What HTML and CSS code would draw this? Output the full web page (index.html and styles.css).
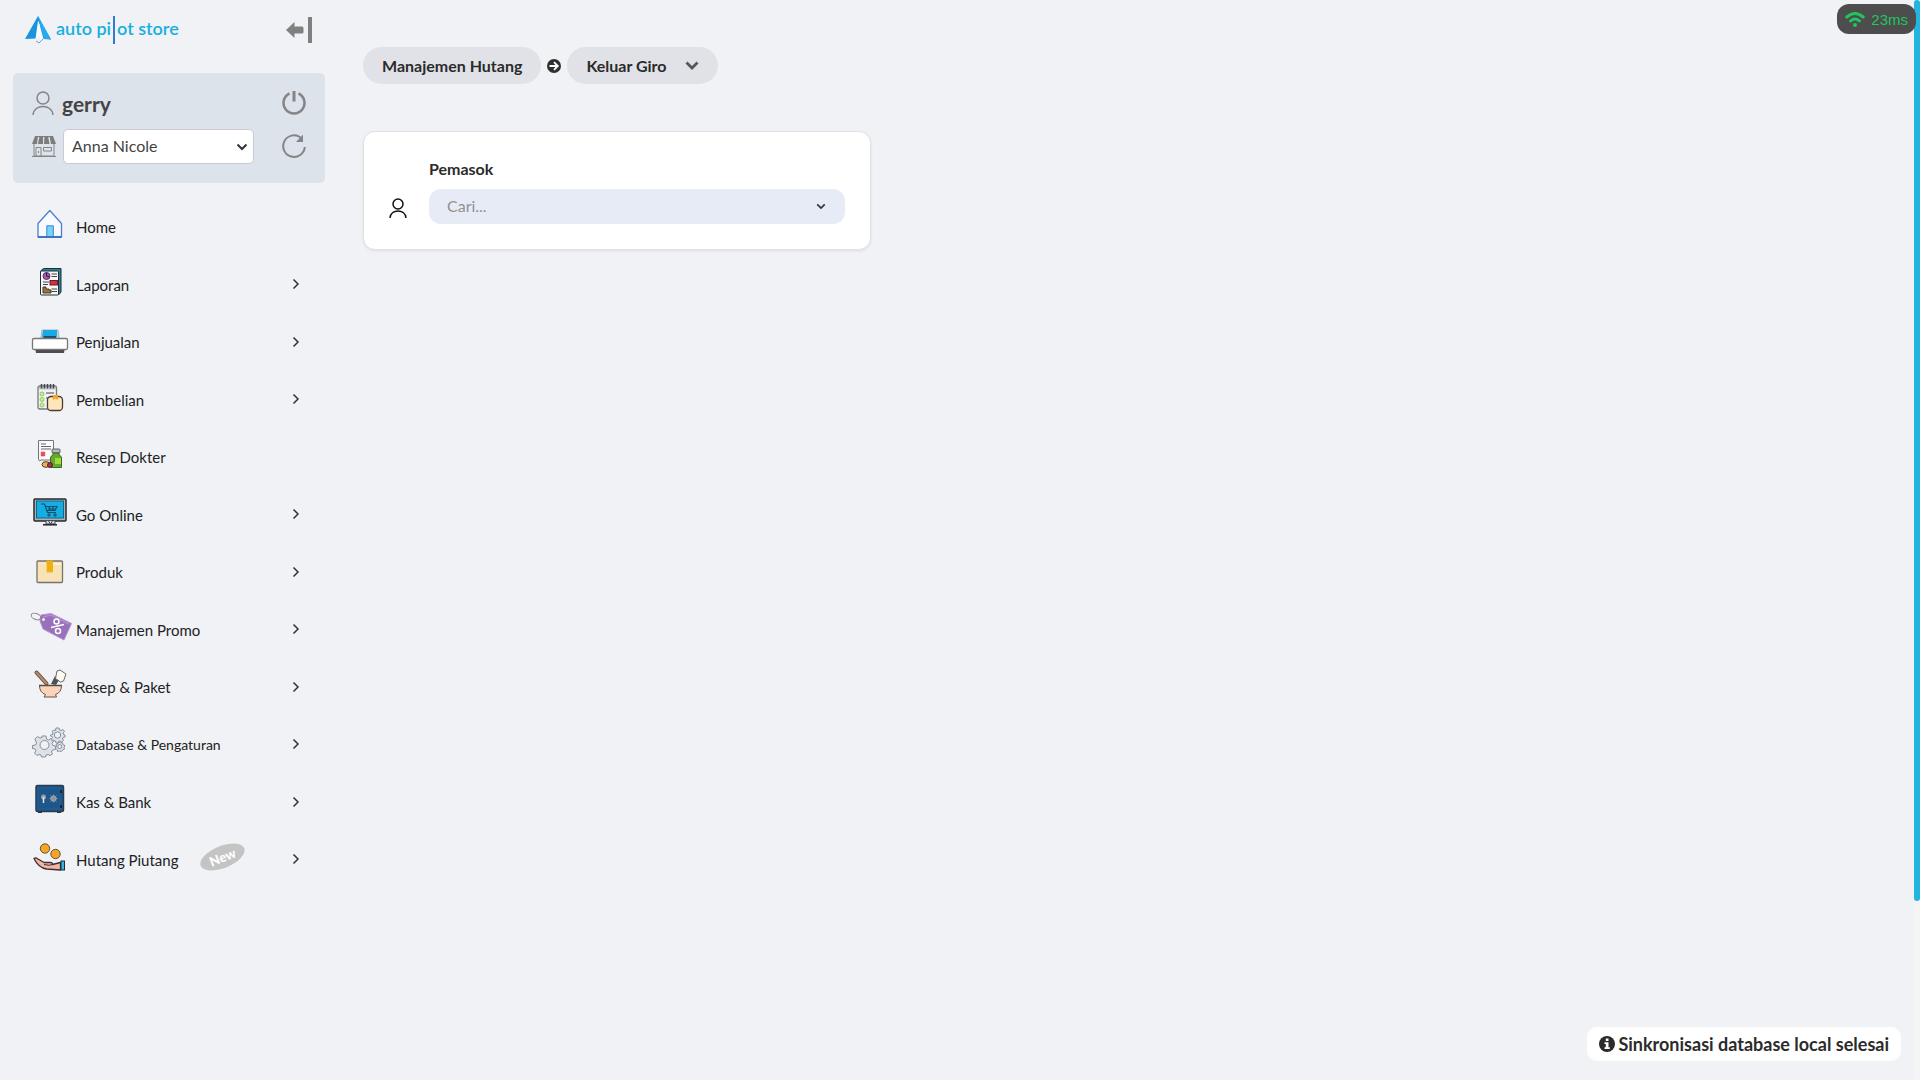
FILE: index.html
```
<!DOCTYPE html>
<html lang="id">
<head>
    <meta charset="UTF-8">
    <meta name="viewport" content="width=device-width, initial-scale=1.0">
    <title>Auto Pilot Store - Keluar Giro</title>
    <link rel="stylesheet" href="styles.css">
</head>
<body>

    <!-- shared icons -->
    <svg class="sprite" width="0" height="0" aria-hidden="true">
        <symbol id="chevron-right" viewBox="0 0 10 12">
            <path d="M2.5 1.5L7 6l-4.5 4.5" fill="none" stroke="currentColor" stroke-width="1.5"/>
        </symbol>
        <symbol id="chevron-down" viewBox="0 0 12 8">
            <path d="M1.5 1.5L6 6l4.5-4.5" fill="none" stroke="currentColor" stroke-width="2"/>
        </symbol>
        <symbol id="user" viewBox="0 0 22 24">
            <circle cx="11" cy="7" r="6" fill="none" stroke="currentColor" stroke-width="1.5"/>
            <path d="M1 24C2 12.5 20 12.5 21 24" fill="none" stroke="currentColor" stroke-width="1.5"/>
        </symbol>
    </svg>

    <div class="layout">

        <aside class="sidebar">
            <div class="sidebar-header">
                <a href="#" class="logo">
                    <svg width="26" height="28" viewBox="0 0 26 28">
                        <path d="M13 0L26 23.5l-7.5-.5L14.500 8 13 5l-2.500 17.500L0 23z" fill="#1b94de"/>
                        <path d="M13 0L26 23.5l-7-1L14 5z" fill="#27aaf0"/>
                        <path d="M13.5 5l4 19-4-3.500-2.500 2.500z" fill="#f5faff"/>
                        <path d="M11 25l3 2 4-4" fill="none" stroke="#6f9fc8"/>
                    </svg>
                    <span class="logo-text">auto pi<span class="logo-bar"></span>ot store</span>
                </a>
                <button type="button" class="icon-btn" aria-label="Tutup menu">
                    <svg width="26" height="26" viewBox="0 0 26 26" fill="#808080">
                        <path d="M0 13l8.5-8v4.5H16q1.5 0 1.5 1.5v4q0 1.5-1.5 1.5H8.5V21z"/>
                        <rect x="22" width="4" height="26"/>
                    </svg>
                </button>
            </div>

            <div class="profile">
                <div class="profile-row">
                    <svg class="profile-icon" width="22" height="24"><use href="#user"/></svg>
                    <span class="profile-name">gerry</span>
                    <button type="button" class="icon-btn" aria-label="Keluar">
                        <svg width="24" height="24" viewBox="0 0 24 24" fill="none" stroke="#858585" stroke-width="2.5">
                            <path d="M7.5 2.5a10.5 10.5 0 1 0 9 0"/>
                            <path d="M12 0v10.5" stroke-width="3"/>
                        </svg>
                    </button>
                </div>
                <div class="profile-row">
                    <svg class="profile-icon" width="24" height="21" viewBox="0 0 24 21">
                        <path d="M2 8v12h20V8M0 20.5h24M4 20v-8.5h5V20M6.5 15v2M11.5 11.5h8V15h-8z" fill="none" stroke="#858585"/>
                        <path d="M3 0h3L5 8H0zM7.5 0H11v8H6zM12.500 0H16l1.5 8H12zM17.500 0H21l3 8h-5z" fill="#7c7c7c"/>
                        <path d="M3 .5h18" stroke="#7c7c7c"/>
                    </svg>
                    <div class="select-wrap">
                        <select class="store-select" aria-label="Toko">
                            <option>Anna Nicole</option>
                        </select>
                        <svg class="select-arrow" width="12" height="8"><use href="#chevron-down"/></svg>
                    </div>
                    <button type="button" class="icon-btn" aria-label="Muat ulang">
                        <svg width="24" height="24" viewBox="0 0 24 24">
                            <path d="M22.8 13A10.8 10.8 0 1 1 18.5 3.5" fill="none" stroke="#858585" stroke-width="2"/>
                            <path d="M21 .5V8h-7z" fill="#858585"/>
                        </svg>
                    </button>
                </div>
            </div>

            <nav class="menu">
                <a href="#" class="menu-item">
                    <svg class="menu-icon" viewBox="0 0 42 32">
                        <path d="M8 15.5V29h23.5V15.5L19.8 2.5z" fill="#f7fbff" stroke="#4a7fd0" stroke-width="1.3" stroke-linejoin="round"/>
                        <path d="M8 29h23.5" stroke="#2d65ba" stroke-width="1.5"/>
                        <path d="M16.800 28V17.800h6.500V28" fill="#74d4fa" stroke="#3d83cc"/>
                    </svg>
                    <span class="menu-label">Home</span>
                </a>
                <a href="#" class="menu-item">
                    <svg class="menu-icon" viewBox="0 0 42 32">
                        <path d="M10.5 5l3-2.5H31V26l-2.500 3z" fill="#2c8298" stroke="#15323c"/>
                        <rect x="10.5" y="5" width="18" height="24" rx="1" fill="#f8f8f8" stroke="#2a2a32"/>
                        <circle cx="16.5" cy="10" r="3.5" fill="#a45ab4" stroke="#5b3168"/>
                        <path d="M16.5 10V6.5M16.5 10l3 1" stroke="#30143a"/>
                        <path d="M21.5 8H27M21.5 10.5H27M13 16h6M13 18.5h5M21.5 23H27M21.5 25.5H27" stroke="#454545"/>
                        <rect x="20" y="14.5" width="7.5" height="4.5" fill="#d72e43" stroke="#6d1c2a"/>
                        <path d="M13 21v6h8v-3h-2v-1h-3v-2z" fill="#8e7a3c" stroke="#493b21"/>
                    </svg>
                    <span class="menu-label">Laporan</span>
                    <svg class="menu-arrow"><use href="#chevron-right"/></svg>
                </a>
                <a href="#" class="menu-item">
                    <svg class="menu-icon" viewBox="0 0 42 32">
                        <path d="M12 7h16l1 8H11z" fill="#d6dde1" stroke="#a3b5bd"/>
                        <path d="M13 7h14v7H12z" fill="#18aae2"/>
                        <path d="M14 13h12v2H13z" fill="#17506b"/>
                        <rect x="2.5" y="15.5" width="35" height="11" rx="1.5" fill="#fff" stroke="#777" stroke-width="1.3"/>
                        <path d="M5.500 27h29l-.5 3H6z" fill="#4d4d52"/>
                    </svg>
                    <span class="menu-label">Penjualan</span>
                    <svg class="menu-arrow"><use href="#chevron-right"/></svg>
                </a>
                <a href="#" class="menu-item">
                    <svg class="menu-icon" viewBox="0 0 42 32">
                        <rect x="8" y="5" width="18.5" height="23" rx="2" fill="#eff1f3" stroke="#767b80" stroke-width="1.3"/>
                        <path d="M9 6h17v2.500H9z" fill="#c5c9ce"/>
                        <path d="M11.5 3v4.5M14.5 3v4.5M17.5 3v4.5M20.5 3v4.5M23.5 3v4.5" stroke="#44464c" stroke-width="1.5"/>
                        <g fill="#c8f0a2" stroke="#8bcb55"><circle cx="12" cy="13" r="2"/><circle cx="12" cy="18.5" r="2"/><circle cx="12" cy="24" r="2"/></g>
                        <path d="M16 12h8M16 17h2" stroke="#45484c"/>
                        <rect x="17.5" y="15.5" width="15" height="14" rx="3.5" fill="#ffe5ba" stroke="#4a3e38" stroke-width="1.3"/>
                        <path d="M23 14h5v5l-2.500-1.500L23 19z" fill="#f5a525"/>
                    </svg>
                    <span class="menu-label">Pembelian</span>
                    <svg class="menu-arrow"><use href="#chevron-right"/></svg>
                </a>
                <a href="#" class="menu-item">
                    <svg class="menu-icon" viewBox="0 0 42 32">
                        <path d="M8.5 2.5h15V22H11l-1.500 1-1-2z" fill="#fafafa" stroke="#74747b"/>
                        <path d="M11 6h5M11 8.5h10M11 11h10" stroke="#66666e"/>
                        <path d="M13 13.5v5M10.5 16h5M11 14l4 4M15 14l-4 4" stroke="#e6495c" stroke-width="1.2"/>
                        <rect x="22" y="11" width="8" height="4" rx="1" fill="#b9bbc0" stroke="#5c6065"/>
                        <path d="M23 15h6v2q2.500 1 2.500 3v9.500h-11V20q0-2 2.500-3z" fill="#61ab2d" stroke="#396b23"/>
                        <path d="M25 20h6v6h-6z" fill="#a4d83f"/>
                        <ellipse cx="16" cy="26.5" rx="4" ry="2.8" fill="#f3b14b" stroke="#523c30"/>
                        <circle cx="20" cy="27" r="2.5" fill="#9e3445" stroke="#4c2833"/>
                    </svg>
                    <span class="menu-label">Resep Dokter</span>
                </a>
                <a href="#" class="menu-item">
                    <svg class="menu-icon" viewBox="0 0 42 32">
                        <rect x="4" y="3" width="32" height="22" rx="1" fill="#a8b1b8" stroke="#27282d" stroke-width="1.5"/>
                        <rect x="6.5" y="5" width="27" height="17" fill="#14aee5" stroke="#176484"/>
                        <path d="M11 8h3.500l3 8.500H26M15.500 10.500H27l-2 4h-8M18 13h8M19 10.500l1 4M23 10.500v4" fill="none" stroke="#174d6a" stroke-width="1.2"/>
                        <circle cx="19" cy="19" r="1.2" fill="#1b91bf" stroke="#174d6a"/>
                        <circle cx="25" cy="19" r="1.2" fill="#1b91bf" stroke="#174d6a"/>
                        <path d="M16 25v3h9v-3M18.5 25l2 3 2-3" fill="#d6d8db" stroke="#45484d"/>
                        <path d="M13 28.8h14" stroke="#202328" stroke-width="1.5"/>
                    </svg>
                    <span class="menu-label">Go Online</span>
                    <svg class="menu-arrow"><use href="#chevron-right"/></svg>
                </a>
                <a href="#" class="menu-item">
                    <svg class="menu-icon" viewBox="0 0 42 32">
                        <rect x="7" y="8" width="25.5" height="21.5" rx="1" fill="#f8e3b8" stroke="#77736d" stroke-width="1.3"/>
                        <path d="M9 10h7v10h7V10h8v2H23" fill="#fff0ce"/>
                        <path d="M16.5 7.5H23v12h-6.5z" fill="#eeb111"/>
                    </svg>
                    <span class="menu-label">Produk</span>
                    <svg class="menu-arrow"><use href="#chevron-right"/></svg>
                </a>
                <a href="#" class="menu-item">
                    <svg class="menu-icon" viewBox="0 0 42 32">
                        <path d="M11 4l10-1.5 20.5 10L34 29 13 18l-3-8z" fill="#9870bc" stroke="#b397cd"/>
                        <path d="M13 6l8-2 18 9" fill="none" stroke="#b68ad0" stroke-width="1.5"/>
                        <circle cx="13.5" cy="8.5" r="1.5" fill="#eee"/>
                        <ellipse cx="6" cy="5.5" rx="5" ry="3" transform="rotate(20 6 5.5)" fill="none" stroke="#85858a"/>
                        <circle cx="26.5" cy="10.5" r="2.5" fill="none" stroke="#fff" stroke-width="1.5"/>
                        <circle cx="28" cy="20" r="2.5" fill="none" stroke="#fff" stroke-width="1.5"/>
                        <path d="M21 16.500l13-3" stroke="#fff" stroke-width="1.5"/>
                    </svg>
                    <span class="menu-label">Manajemen Promo</span>
                    <svg class="menu-arrow"><use href="#chevron-right"/></svg>
                </a>
                <a href="#" class="menu-item">
                    <svg class="menu-icon" viewBox="0 0 42 32">
                        <path d="M6.500 4.500l10 11" stroke="#594238" stroke-width="4" stroke-linecap="round"/>
                        <path d="M6.500 4.500l10 11" stroke="#b58a6e" stroke-width="2.5" stroke-linecap="round"/>
                        <path d="M21 16l4-8 4 4-3 5z" fill="#4f5053"/>
                        <path d="M27 3l3-1 6 4-2.500 7-3 1-5-3.500z" fill="#fffaf0" stroke="#696767"/>
                        <path d="M9.500 17.500h22q0 7-6 9l1 2.500H14l1.500-2.500q-6-2-6-9z" fill="#fad3b8" stroke="#6a5149"/>
                        <path d="M9 17.5h23" stroke="#544a48" stroke-width="1.5"/>
                    </svg>
                    <span class="menu-label">Resep &amp; Paket</span>
                    <svg class="menu-arrow"><use href="#chevron-right"/></svg>
                </a>
                <a href="#" class="menu-item">
                    <svg class="menu-icon" viewBox="0 0 42 32">
                        <g fill="#dde2e8" stroke="#87909a">
                            <path d="M12 10h4l.5 3 2 1 2.500-1.500 2.500 2.500-1.500 2.500 1 2 2.500.5v3.500l-3 .5-1 2 1 2-2.500 1.500-2-1-2 .5-.5 2h-4l-.5-2-2-.5-2 1-2.500-2.500 1.500-2.500-1-1.500-2.500-.5v-3l3-.5 1-2L5 13l2.500-2.500 2.500 1.500 2-.5z"/>
                            <path d="M26 2h3l.5 2 1.500.5 2-1 1.500 2L33 7l.5 1.500 1.500.5v2l-2 .5-.5 1.500 1 1.500-2 1.500-1.500-1-1.500.5-.5 1.500h-2l-.5-2-1.500-.5-1.500.5-1-2 1-1.500-.5-1-1.500-.5V9l2-.5.5-1.500-1-1.500 2-1.500 1.500.5z"/>
                            <path d="M29 15.500l1.500 1.500 2-.5.5 2 2 1-1 2 .5 1.500-2 1-1 1.500-2-.5-2 .5-.5-2-1.500-1.500 1-2-.5-1.500 2-1z"/>
                            <circle cx="14.5" cy="19" r="4.5" fill="#eff1f5"/>
                            <circle cx="27.5" cy="9" r="3.2" fill="#eff1f5"/>
                            <circle cx="29.8" cy="20.5" r="2" fill="#eff1f5"/>
                        </g>
                    </svg>
                    <span class="menu-label menu-label-long">Database &amp; Pengaturan</span>
                    <svg class="menu-arrow"><use href="#chevron-right"/></svg>
                </a>
                <a href="#" class="menu-item">
                    <svg class="menu-icon" viewBox="0 0 42 32">
                        <path d="M8 28h4v2H8zM27 28h4v2h-4z" fill="#30343b"/>
                        <rect x="6" y="2.5" width="27.5" height="26" rx="1.5" fill="#1c568a" stroke="#293c50" stroke-width="1.5"/>
                        <path d="M8 5h22v21H8z" fill="none" stroke="#245f92"/>
                        <path d="M31 7v3M31 22v3" stroke="#182433" stroke-width="2"/>
                        <circle cx="13.5" cy="14" r="2.5" fill="#9aa0a8"/>
                        <path d="M13.5 14v6" stroke="#e9e1d9" stroke-width="1.5"/>
                        <circle cx="23.5" cy="15.5" r="2.5" fill="none" stroke="#a8a8a8" stroke-width="1.2"/>
                        <path d="M23.5 11.500v8M19.500 15.500h8M20.500 12.500l6 6M26.500 12.500l-6 6" stroke="#8b96a2"/>
                    </svg>
                    <span class="menu-label">Kas &amp; Bank</span>
                    <svg class="menu-arrow"><use href="#chevron-right"/></svg>
                </a>
                <a href="#" class="menu-item">
                    <svg class="menu-icon" viewBox="0 0 42 32">
                        <circle cx="15" cy="7.5" r="4.7" fill="#f6a623" stroke="#5f5040"/>
                        <circle cx="25.5" cy="13" r="4.7" fill="#f6a623" stroke="#5f5040"/>
                        <path d="M4 17.500q1.500-1.500 4 .5l6 3.500h6q3 0 2.500 2l8-2v7.500l-14-1q-8-1-12.500-10.500z" fill="#f5b5a2" stroke="#3a2f35" stroke-width="1.3" stroke-linejoin="round"/>
                        <path d="M14 23.500q5 1.500 9 0" fill="none" stroke="#3a2f35"/>
                        <rect x="31" y="20" width="3.5" height="9" fill="#31b8df" stroke="#202a35"/>
                    </svg>
                    <span class="menu-label">Hutang Piutang</span>
                    <span class="badge-new">New</span>
                    <svg class="menu-arrow"><use href="#chevron-right"/></svg>
                </a>
            </nav>
        </aside>

        <main class="content">
            <div class="breadcrumb">
                <button type="button" class="crumb">Manajemen Hutang</button>
                <svg width="14" height="14" viewBox="0 0 14 14">
                    <circle cx="7" cy="7" r="7" fill="#2f2f2f"/>
                    <path d="M2.5 7h8M7 3.2L10.8 7 7 10.8" fill="none" stroke="#fff" stroke-width="1.8"/>
                </svg>
                <button type="button" class="crumb">
                    Keluar Giro
                    <svg class="crumb-arrow" width="14" height="9" viewBox="0 0 14 9">
                        <path d="M1.5 1.5L7 7l5.5-5.5" fill="none" stroke="#555" stroke-width="2.8"/>
                    </svg>
                </button>
            </div>

            <section class="card">
                <svg class="card-icon" width="18" height="20" viewBox="0 0 18 20">
                    <circle cx="9" cy="6" r="5" fill="none" stroke="#111" stroke-width="1.5"/>
                    <path d="M1 20c1-9.500 15-9.500 16 0" fill="none" stroke="#111" stroke-width="1.5"/>
                </svg>
                <div class="field">
                    <label for="pemasok">Pemasok</label>
                    <div class="search">
                        <input type="text" id="pemasok" placeholder="Cari...">
                        <svg class="search-arrow" width="10" height="7" viewBox="0 0 12 8"><use href="#chevron-down"/></svg>
                    </div>
                </div>
            </section>
        </main>
    </div>

    <div class="scroll-track">
        <div class="scroll-thumb"></div>
    </div>

    <div class="ping">
        <svg width="20" height="15" viewBox="0 0 20 15" fill="none" stroke="#22c55e" stroke-width="3" stroke-linecap="round">
            <path d="M1.800 5Q10-2 18.200 5"/>
            <path d="M5.500 9q4.500-4 9 0"/>
            <circle cx="10" cy="13" r="2" fill="#22c55e" stroke="none"/>
        </svg>
        <span>23ms</span>
    </div>

    <div class="toast" role="status">
        <svg width="16" height="16" viewBox="0 0 16 16">
            <circle cx="8" cy="8" r="8" fill="#2b2b2b"/>
            <path d="M6.800 2.500h2.700V5H6.800zM5.500 6.300h4v5h1.300V13H5.500v-1.700h1.300V8H5.500z" fill="#fff"/>
        </svg>
        <span>Sinkronisasi database local selesai</span>
    </div>

</body>
</html>
```
FILE: styles.css
```
* {
    box-sizing: border-box;
}
body {
    margin: 0;
    background-color: #f0f2f6;
    color: #2b2b2b;
    font-family: Lato, "Liberation Sans", sans-serif;
    font-size: 16px;
}
button, input, select {
    font-family: inherit;
}
.sprite {
    position: absolute;
}
.layout {
    display: flex;
    min-height: 100vh;
}

/* sidebar */
.sidebar {
    flex: 0 0 325px;
    padding: 13px 0 0 13px;
}
.sidebar-header {
    display: flex;
    align-items: center;
    justify-content: space-between;
    height: 34px;
    padding: 0 13px 0 12px;
}
.logo {
    display: flex;
    align-items: center;
    gap: 5px;
    text-decoration: none;
}
.logo-text {
    display: flex;
    align-items: flex-start;
    font-size: 18px;
    line-height: 24px;
    font-weight: 600;
    color: #18aede;
    white-space: pre;
}
.logo-bar {
    width: 2px;
    height: 28px;
    margin: 0 2px;
    background-color: #3279d0;
}
.icon-btn {
    display: flex;
    padding: 0;
    border: none;
    background: none;
    cursor: pointer;
}
.profile {
    display: flex;
    flex-direction: column;
    gap: 7px;
    margin-top: 26px;
    padding: 12px 19px 19px 19px;
    border-radius: 5px;
    background-color: #dce3eb;
}
.profile-row {
    display: flex;
    align-items: center;
    min-height: 36px;
}
.profile-icon {
    color: #858585;
}
.profile-name {
    padding-left: 8px;
    font-size: 21px;
    font-weight: bold;
    color: #444;
}
.profile-row .icon-btn {
    margin-left: auto;
}
.select-wrap {
    position: relative;
    flex: 0 0 191px;
    margin-left: 7px;
}
.store-select {
    appearance: none;
    width: 100%;
    height: 35px;
    padding: 0 30px 2px 8px;
    border: 1px solid #c8ccd2;
    border-radius: 5px;
    background-color: #fff;
    font-size: 16px;
    color: #444;
}
.select-arrow {
    position: absolute;
    right: 6px;
    top: 14px;
    color: #333;
    pointer-events: none;
}

/* menu */
.menu {
    display: grid;
    grid-auto-rows: 57px 58px;
    margin-top: 15px;
}
.menu-item {
    display: flex;
    align-items: center;
    padding: 0 24px 0 17px;
    color: #222;
    font-size: 15px;
    text-decoration: none;
}
.menu-icon {
    width: 42px;
    height: 32px;
    margin-bottom: 5px;
}
.menu-label {
    padding: 1px 0 0 4px;
    white-space: nowrap;
}
.menu-label-long {
    font-size: 14px;
}
.menu-arrow {
    width: 10px;
    height: 12px;
    margin-left: auto;
    color: #333;
}
.badge-new {
    width: 47px;
    margin: 0 0 5px 21px;
    border-radius: 50%;
    background-color: #c4c4c4;
    color: #fff;
    font-size: 13px;
    line-height: 22px;
    font-weight: 900;
    text-align: center;
    transform: rotate(-22deg);
}

/* content */
.content {
    flex: 1;
    padding: 47px 34px 40px 38px;
}
.breadcrumb {
    display: flex;
    align-items: center;
    gap: 6px;
}
.crumb {
    display: flex;
    align-items: center;
    height: 37px;
    padding: 0 19px 1px;
    border: none;
    border-radius: 19px;
    background-color: #e0e2e7;
    color: #2b2b2b;
    font-size: 16px;
    font-weight: bold;
    cursor: pointer;
}
.crumb-arrow {
    margin-left: 18px;
}
.card {
    display: flex;
    align-items: flex-end;
    width: 33.33%;
    min-width: 320px;
    margin-top: 47px;
    padding: 27px 25px 25px 25px;
    border: 1px solid #dfe1e5;
    border-radius: 12px;
    background-color: #fff;
    box-shadow: 0 1px 3px rgba(0, 0, 0, 0.08);
}
.card-icon {
    flex: none;
    margin: 0 22px 6px 0;
}
.field {
    flex: 1;
}
.field label {
    display: block;
    margin-bottom: 10px;
    font-weight: bold;
    line-height: 20px;
}
.search {
    position: relative;
}
.search input {
    display: block;
    width: 100%;
    height: 35px;
    padding: 0 40px 3px 18px;
    border: none;
    border-radius: 12px;
    background-color: #e7ebf5;
    font-size: 16px;
}
.search input::placeholder {
    color: #929292;
}
.search-arrow {
    position: absolute;
    right: 19px;
    top: 14px;
    color: #333;
    pointer-events: none;
}

/* floating parts */
.scroll-track {
    position: fixed;
    top: 0;
    right: 0;
    bottom: 0;
    width: 6px;
    background-color: #f4f4f4;
}
.scroll-thumb {
    height: 83.4%;
    border-radius: 3px;
    background-color: #23b5df;
}
.ping {
    position: fixed;
    top: 4px;
    right: 4px;
    display: flex;
    align-items: center;
    gap: 6px;
    height: 30px;
    padding: 0 8px;
    border-radius: 12px;
    background-color: #4d4d4d;
    color: #22c55e;
    font-family: "Liberation Sans", sans-serif;
    font-size: 15px;
}
.toast {
    position: fixed;
    right: 19px;
    bottom: 19px;
    display: flex;
    align-items: center;
    gap: 3px;
    height: 34px;
    padding: 0 12px 1px;
    border-radius: 10px;
    background-color: #fff;
    font-size: 18px;
    font-weight: bold;
}
```
